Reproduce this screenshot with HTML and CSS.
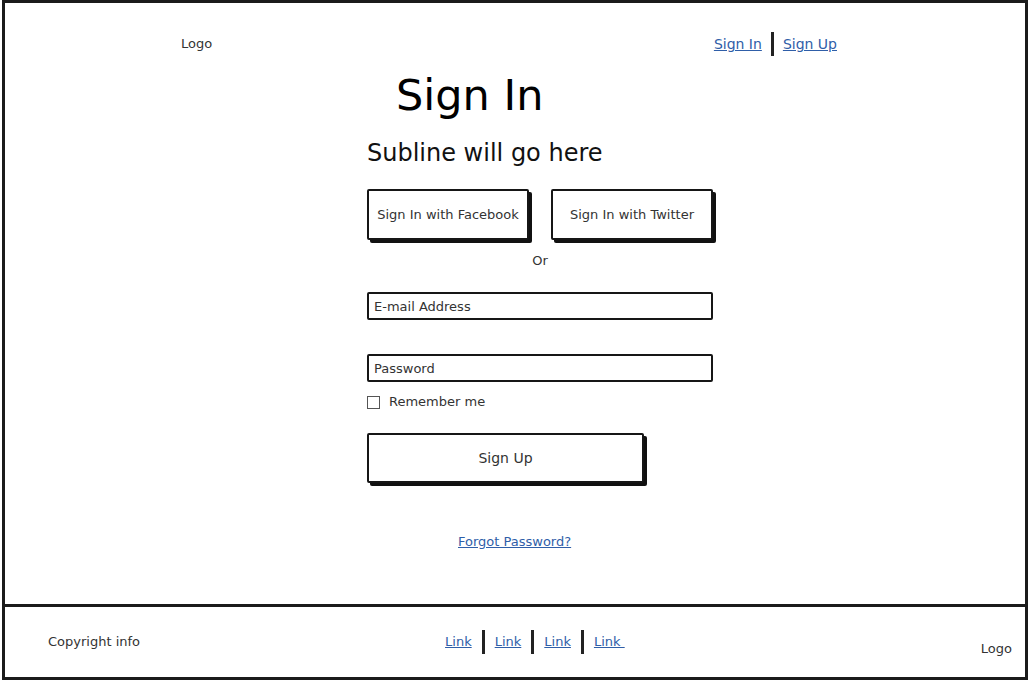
FILE: index.html
```html
<!DOCTYPE html>
<html lang="en">
<head>
<meta charset="utf-8">
<title>Sign In</title>
<link rel="stylesheet" href="styles.css">
</head>
<body>
<div class="frame">
  <div class="main">
    <header class="top">
      <span class="logo">Logo</span>
      <nav class="toplinks">
        <a href="#" class="link">Sign In</a>
        <span class="bar"></span>
        <a href="#" class="link">Sign Up</a>
      </nav>
    </header>
    <div class="column">
      <h1 class="title">Sign In</h1>
      <p class="subline">Subline will go here</p>
      <div class="social">
        <button class="btn social-btn">Sign In with Facebook</button>
        <button class="btn social-btn">Sign In with Twitter</button>
      </div>
      <div class="or">Or</div>
      <input class="field email" type="text" placeholder="E-mail Address">
      <input class="field password" type="text" placeholder="Password">
      <label class="remember"><span class="check"></span>Remember me</label>
      <button class="btn submit">Sign Up</button>
      <a href="#" class="link forgot">Forgot Password?</a>
    </div>
  </div>
  <footer class="foot">
    <span class="copy">Copyright info</span>
    <nav class="footlinks">
      <a href="#" class="link">Link</a>
      <span class="bar"></span>
      <a href="#" class="link">Link</a>
      <span class="bar"></span>
      <a href="#" class="link">Link</a>
      <span class="bar"></span>
      <a href="#" class="link">Link&nbsp;</a>
    </nav>
    <span class="logo foot-logo">Logo</span>
  </footer>
</div>
</body>
</html>
```

FILE: styles.css
```css
* { box-sizing: border-box; }
html, body { margin: 0; padding: 0; background: #fff; }
body {
  font-family: "DejaVu Sans", "Noto Sans", sans-serif;
  color: #222;
  font-size: 13px;
  line-height: 16px;
}
.frame {
  margin-left: 2px;
  width: 1026px;
  height: 680px;
  border: 3px solid #1b1b1b;
  display: flex;
  flex-direction: column;
}
.main {
  flex: 1;
}
.top {
  display: flex;
  justify-content: space-between;
  align-items: center;
  height: 24px;
  margin-top: 29px;
  padding: 0 188px 0 176px;
}
.logo {
  font-size: 13px;
  color: #333;
}
.toplinks {
  display: flex;
  align-items: center;
  font-size: 14px;
}
.link {
  color: #2f5ea8;
  text-decoration: underline;
}
.bar {
  display: inline-block;
  width: 3px;
  height: 24px;
  background: #222;
  margin: 0 9px;
}
.column {
  width: 350px;
  margin-left: 362px;
  display: flex;
  flex-direction: column;
  align-items: flex-start;
}
.title {
  margin: 14px 0 0 0;
  padding-left: 29px;
  font-size: 43px;
  line-height: 50px;
  font-weight: normal;
  color: #000;
}
.subline {
  margin: 18px 0 0 0;
  font-size: 24px;
  line-height: 30px;
  color: #111;
}
.social {
  display: flex;
  gap: 22px;
  margin-top: 21px;
}
.btn {
  font-family: inherit;
  background: #fff;
  border: 2px solid #161616;
  border-radius: 2px;
  box-shadow: 3px 3px 0 #111;
  color: #333;
  padding: 0;
  cursor: pointer;
}
.social-btn {
  width: 162px;
  height: 51px;
  font-size: 13px;
}
.or {
  align-self: stretch;
  text-align: center;
  margin-top: 13px;
  padding-right: 4px;
  color: #333;
}
.field {
  display: block;
  width: 346px;
  height: 28px;
  border: 2px solid #161616;
  border-radius: 2px;
  padding: 0 5px;
  font-family: inherit;
  font-size: 13px;
  color: #333;
  outline: none;
}
.field::placeholder { color: #333; opacity: 1; }
.email { margin-top: 23px; }
.password { margin-top: 34px; }
.remember {
  display: flex;
  align-items: center;
  margin-top: 12px;
  color: #333;
  font-size: 13px;
}
.check {
  width: 13px;
  height: 13px;
  border: 1px solid #555;
  margin-right: 9px;
}
.submit {
  margin-top: 23px;
  width: 277px;
  height: 50px;
  font-size: 14px;
}
.forgot {
  margin-top: 51px;
  margin-left: 91px;
  font-size: 13px;
}
.foot {
  height: 73px;
  border-top: 3px solid #1b1b1b;
  display: flex;
  align-items: center;
  padding: 0 13px 0 43px;
}
.copy { color: #333; }
.footlinks {
  display: flex;
  align-items: center;
  margin-left: 305px;
}
.footlinks .bar { margin: 0 10px; }
.foot-logo {
  margin-left: auto;
  align-self: flex-end;
  margin-bottom: 20px;
}
```
